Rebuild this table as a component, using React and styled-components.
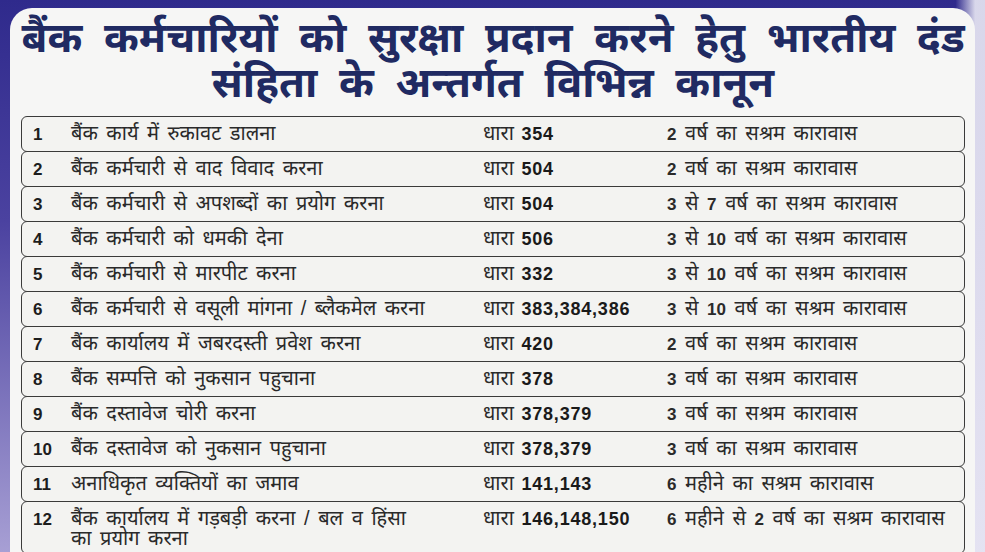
import React from 'react'
import styled, { createGlobalStyle } from 'styled-components'

const GlobalStyle = createGlobalStyle`
  html, body {
    margin: 0;
    padding: 0;
    width: 985px;
    height: 552px;
    overflow: hidden;
    background:
      linear-gradient(90deg, rgba(0,0,0,0) 97%, rgba(235,234,245,0.9) 99%),
      linear-gradient(180deg, #2f2a8c 0%, #4b42a0 40%, #a79fd4 100%);
  }
  body {
    font-family: 'Liberation Sans', 'Noto Sans Devanagari', 'Noto Sans', sans-serif;
  }
`

const laws = [
  ['1', 'बैंक कार्य में रुकावट डालना', '354', '2 वर्ष का सश्रम कारावास'],
  ['2', 'बैंक कर्मचारी से वाद विवाद करना', '504', '2 वर्ष का सश्रम कारावास'],
  ['3', 'बैंक कर्मचारी से अपशब्दों का प्रयोग करना', '504', '3 से 7 वर्ष का सश्रम कारावास'],
  ['4', 'बैंक कर्मचारी को धमकी देना', '506', '3 से 10 वर्ष का सश्रम कारावास'],
  ['5', 'बैंक कर्मचारी से मारपीट करना', '332', '3 से 10 वर्ष का सश्रम कारावास'],
  ['6', 'बैंक कर्मचारी से वसूली मांगना / ब्लैकमेल करना', '383,384,386', '3 से 10 वर्ष का सश्रम कारावास'],
  ['7', 'बैंक कार्यालय में जबरदस्ती प्रवेश करना', '420', '2 वर्ष का सश्रम कारावास'],
  ['8', 'बैंक सम्पत्ति को नुकसान पहुचाना', '378', '3 वर्ष का सश्रम कारावास'],
  ['9', 'बैंक दस्तावेज चोरी करना', '378,379', '3 वर्ष का सश्रम कारावास'],
  ['10', 'बैंक दस्तावेज को नुकसान पहुचाना', '378,379', '3 वर्ष का सश्रम कारावास'],
  ['11', 'अनाधिकृत व्यक्तियों का जमाव', '141,143', '6 महीने का सश्रम कारावास'],
  ['12', 'बैंक कार्यालय में गड़बड़ी करना / बल व हिंसा का प्रयोग करना', '146,148,150', '6 महीने से 2 वर्ष का सश्रम कारावास'],
]

// turns the numerals of the punishment text bold
const Punish = ({ text }) =>
  text.split(/(\d+)/).map((part, i) =>
    /\d/.test(part) ? <b key={i}>{part}</b> : <span key={i}>{part}</span>
  )

const App = () => (
  <>
    <GlobalStyle />
    <Board>
      <Title>
        बैंक कर्मचारियों को सुरक्षा प्रदान करने हेतु भारतीय दंड
        <br />
        संहिता के अन्तर्गत विभिन्न कानून
      </Title>
      <Table>
        {laws.map(([no, desc, section, punish]) => (
          <Row key={no} $tall={no === '12'}>
            <Num>{no}</Num>
            <Desc $narrow={no === '12'}>{desc}</Desc>
            <Section>
              धारा <b>{section}</b>
            </Section>
            <Cell>
              <Punish text={punish} />
            </Cell>
          </Row>
        ))}
      </Table>
    </Board>
  </>
)

const Board = styled.main`
  margin: 8px 10px 0 10px;
  height: 560px;
  background: #f6f6f5;
  border-radius: 22px 22px 0 0;
  padding: 7px 10px 0 11px;
  box-sizing: border-box;
`

const Title = styled.h1`
  margin: 0 -10px;
  text-align: center;
  white-space: nowrap;
  color: #202a62;
  font-size: 42px;
  font-weight: 700;
  line-height: 45px;
  word-spacing: 10px;
`

const Table = styled.div`
  margin-top: 11px;
  display: flex;
  flex-direction: column;
`

const Row = styled.div`
  display: grid;
  grid-template-columns: 38px 412px 184px 1fr;
  align-items: start;
  height: ${p => (p.$tall ? '53px' : '36px')};
  box-sizing: border-box;
  border: 1.5px solid #3a3a3a;
  border-radius: 6px;
  margin-top: -1px;
  padding: 6px 0 0 11px;
  color: #1d1d1d;
  font-size: 20px;
  line-height: 21px;
  word-spacing: 3px;
  background: #f3f3f1;
  &:first-child {
    margin-top: 0;
  }
`

const Num = styled.span`
  font-weight: 700;
  font-size: 17px;
  padding-top: 1px;
`

const Desc = styled.span`
  color: #2a2a2a;
  max-width: ${p => (p.$narrow ? '345px' : 'none')};
  line-height: 20px;
`

const Section = styled.span`
  color: #2a2a2a;
  word-spacing: 2px;
  b {
    font-weight: 700;
    font-size: 18px;
    letter-spacing: 0.8px;
    color: #1a1a1a;
  }
`

const Cell = styled.span`
  color: #2a2a2a;
  b {
    font-weight: 700;
    font-size: 17px;
  }
`

export default App
